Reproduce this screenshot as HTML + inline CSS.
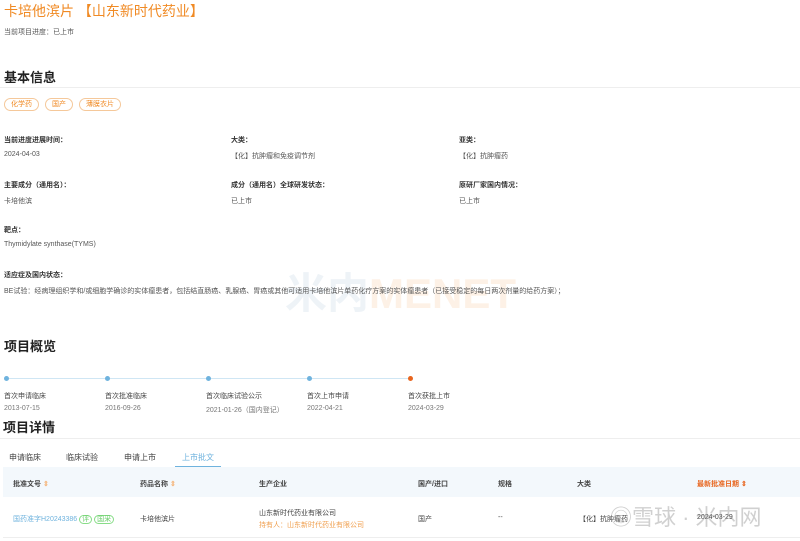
<!DOCTYPE html>
<html><head><meta charset="utf-8"><style>
*{margin:0;padding:0;box-sizing:border-box}
body{width:800px;height:541px;overflow:hidden;background:#fff;font-family:"Liberation Sans","Noto Sans CJK SC",sans-serif;color:#333;position:relative}
.a{position:absolute;white-space:nowrap}
.s{font-size:7px;color:#555}
.l{font-size:7px;color:#333;font-weight:bold}
.h{font-size:13px;font-weight:bold;color:#222}
.tag{position:absolute;top:98px;height:13px;border:1px solid #f5c89a;border-radius:7px;font-size:7px;color:#f08a24;line-height:11px;text-align:center}
.dot{position:absolute;top:376px;width:5px;height:5px;border-radius:50%;background:#6fb3de}
.ln{position:absolute;top:378px;height:1px;background:#cfe6f4}
.th{font-size:7px;font-weight:bold;color:#444;top:479px}
.td{font-size:7px;color:#444}
</style></head><body>
<div class="a" style="left:4px;top:1px;font-size:14px;color:#f08a24">卡培他滨片 【山东新时代药业】</div>
<div class="a s" style="left:4px;top:27px">当前项目进度：已上市</div>
<div class="a h" style="left:4px;top:67px">基本信息</div>
<div class="a" style="left:0;top:87px;width:800px;height:1px;background:#eee"></div>
<div class="tag" style="left:4px;width:35px">化学药</div>
<div class="tag" style="left:45px;width:28px">国产</div>
<div class="tag" style="left:79px;width:42px">薄膜衣片</div>

<div class="a" style="left:285px;top:260px;font-size:42px;font-weight:bold;color:#eef3f7;letter-spacing:0px">米内<span style="color:#fdf1e6">MENET</span></div>

<div class="a l" style="left:4px;top:135px">当前进度进展时间：</div>
<div class="a s" style="left:4px;top:151px">2024-04-03</div>
<div class="a l" style="left:231px;top:135px">大类：</div>
<div class="a s" style="left:231px;top:151px">【化】抗肿瘤和免疫调节剂</div>
<div class="a l" style="left:459px;top:135px">亚类：</div>
<div class="a s" style="left:459px;top:151px">【化】抗肿瘤药</div>
<div class="a l" style="left:4px;top:180px">主要成分（通用名）：</div>
<div class="a s" style="left:4px;top:196px">卡培他滨</div>
<div class="a l" style="left:231px;top:180px">成分（通用名）全球研发状态：</div>
<div class="a s" style="left:231px;top:196px">已上市</div>
<div class="a l" style="left:459px;top:180px">原研厂家国内情况：</div>
<div class="a s" style="left:459px;top:196px">已上市</div>
<div class="a l" style="left:4px;top:225px">靶点：</div>
<div class="a s" style="left:4px;top:241px">Thymidylate synthase(TYMS)</div>
<div class="a l" style="left:4px;top:270px">适应症及国内状态：</div>
<div class="a s" style="left:4px;top:286px">BE试验：经病理组织学和/或细胞学确诊的实体瘤患者，包括结直肠癌、乳腺癌、胃癌或其他可适用卡培他滨片单药化疗方案的实体瘤患者（已接受稳定的每日两次剂量的给药方案）；</div>

<div class="a h" style="left:4px;top:336px">项目概览</div>
<div class="ln" style="left:9px;width:400px"></div>
<div class="dot" style="left:4px"></div><div class="dot" style="left:105px"></div><div class="dot" style="left:206px"></div><div class="dot" style="left:307px"></div><div class="dot" style="left:408px;background:#e8651e"></div>
<div class="a s" style="left:4px;top:391px;color:#444">首次申请临床</div><div class="a s" style="left:4px;top:405px;color:#777">2013-07-15</div>
<div class="a s" style="left:105px;top:391px;color:#444">首次批准临床</div><div class="a s" style="left:105px;top:405px;color:#777">2016-09-26</div>
<div class="a s" style="left:206px;top:391px;color:#444">首次临床试验公示</div><div class="a s" style="left:206px;top:405px;color:#777">2021-01-26（国内登记）</div>
<div class="a s" style="left:307px;top:391px;color:#444">首次上市申请</div><div class="a s" style="left:307px;top:405px;color:#777">2022-04-21</div>
<div class="a s" style="left:408px;top:391px;color:#444">首次获批上市</div><div class="a s" style="left:408px;top:405px;color:#777">2024-03-29</div>

<div class="a h" style="left:3px;top:417px">项目详情</div>
<div class="a" style="left:0;top:438px;width:800px;height:1px;background:#eee"></div>
<div class="a" style="left:9px;top:452px;font-size:8px;color:#444">申请临床</div>
<div class="a" style="left:66px;top:452px;font-size:8px;color:#444">临床试验</div>
<div class="a" style="left:124px;top:452px;font-size:8px;color:#444">申请上市</div>
<div class="a" style="left:182px;top:452px;font-size:8px;color:#6fb3de">上市批文</div>
<div class="a" style="left:175px;top:466px;width:46px;height:1px;background:#6fb3de"></div>
<div class="a" style="left:3px;top:467px;width:797px;height:30px;background:#f3f8fc"></div>
<div class="a" style="left:3px;top:537px;width:797px;height:1px;background:#eee"></div>
<div class="a th" style="left:13px">批准文号 <span style="color:#f5b57a">⇕</span></div>
<div class="a th" style="left:140px">药品名称 <span style="color:#f5b57a">⇕</span></div>
<div class="a th" style="left:259px">生产企业</div>
<div class="a th" style="left:418px">国产/进口</div>
<div class="a th" style="left:498px">规格</div>
<div class="a th" style="left:577px">大类</div>
<div class="a th" style="left:697px;color:#e8651e">最新批准日期 ⇕</div>
<div class="a td" style="left:13px;top:514px;color:#6fb3de">国药准字H20243386 <span style="color:#6c6;border:1px solid #8d8;border-radius:5px;padding:0 2px">评</span> <span style="color:#6c6;border:1px solid #8d8;border-radius:5px;padding:0 2px">国采</span></div>
<div class="a td" style="left:140px;top:514px">卡培他滨片</div>
<div class="a td" style="left:259px;top:508px">山东新时代药业有限公司</div>
<div class="a td" style="left:259px;top:520px;color:#f0a050">持有人：山东新时代药业有限公司</div>
<div class="a td" style="left:418px;top:514px">国产</div>
<div class="a td" style="left:498px;top:514px">--</div>
<div class="a td" style="left:579px;top:514px">【化】抗肿瘤药</div>
<div class="a td" style="left:697px;top:514px">2024-03-29</div>
<div class="a" style="left:610px;top:500px;font-size:22px;color:rgba(150,150,150,0.45)">◎雪球 · 米内网</div>
</body></html>
